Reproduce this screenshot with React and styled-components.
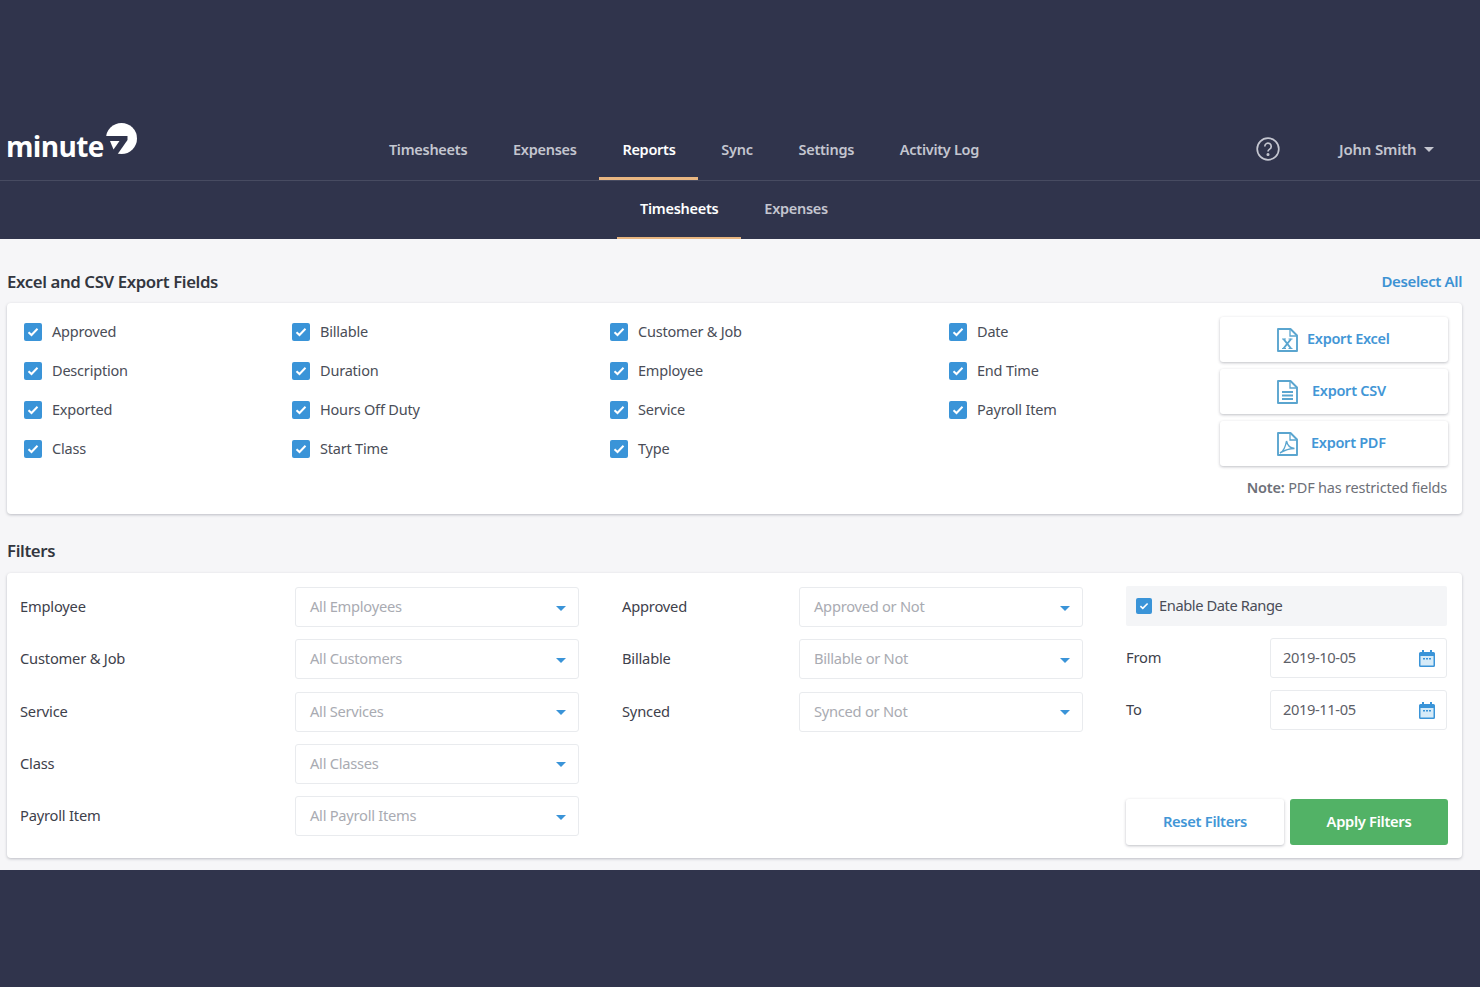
import React from "react"
import styled, { createGlobalStyle } from "styled-components"

const GlobalStyle = createGlobalStyle`
  html, body {
    margin: 0;
    padding: 0;
    background: #30344c;
  }
  * {
    box-sizing: border-box;
  }
  body {
    font-family: "Noto Sans", "Liberation Sans", sans-serif;
  }
`

const Page = styled.div`
  width: 1480px;
  height: 987px;
  background: #30344c;
  padding-top: 120px;
  overflow: hidden;
`

const MainBar = styled.header`
  display: flex;
  align-items: stretch;
  height: 61px;
  border-bottom: 1px solid #474b61;
`

const LogoWrap = styled.div`
  width: 366px;
  padding: 2px 0 0 6px;
  display: flex;
  align-items: flex-start;
`

const LogoText = styled.span`
  font-family: "Open Sans", sans-serif;
  font-weight: 700;
  font-size: 28px;
  letter-spacing: -0.65px;
  line-height: 48px;
  color: #fff;
`

const LogoMark = styled.svg`
  width: 31px;
  height: 33px;
  margin: 0 0 0 2px;
`

const Nav = styled.nav`
  display: flex;
  width: 855px;
`

const NavItem = styled.a`
  display: flex;
  align-items: center;
  padding: 0 22.9px;
  height: 60px;
  font-size: 14.5px;
  font-weight: 600;
  letter-spacing: -0.28px;
  color: ${p => (p.$active ? "#fff" : "#c4c6d0")};
  border-bottom: 3px solid ${p => (p.$active ? "#e8b681" : "transparent")};
`

const UserArea = styled.div`
  display: flex;
  align-items: center;
  height: 58px;
  color: #c4c6d0;
`

const HelpIcon = styled.svg`
  width: 24px;
  height: 24px;
  margin: 0 59px 0 35px;
`

const UserName = styled.span`
  font-size: 15px;
  font-weight: 600;
  letter-spacing: -0.2px;
`

const Caret = styled.span`
  width: 0;
  height: 0;
  margin-left: 7px;
  border-left: 5px solid transparent;
  border-right: 5px solid transparent;
  border-top: 5px solid #c4c6d0;
`

const SubBar = styled.div`
  display: flex;
  height: 58px;
  padding-left: 617px;
`

const SubItem = styled(NavItem)`
  height: 58px;
  padding: 0 23px 3px;
  border-bottom-width: 2px;
`

const Content = styled.main`
  height: 631px;
  background: #f6f6f8;
  padding: 0 18px 0 7px;
`

const SectionHead = styled.div`
  display: flex;
  align-items: center;
  justify-content: space-between;
  height: 64px;
  padding-top: 20px;
`

const FiltersHead = styled(SectionHead)`
  height: 59px;
  padding-top: 16px;
  padding-bottom: 3px;
`

const SectionTitle = styled.h2`
  margin: 0;
  font-size: 16.8px;
  font-weight: 600;
  letter-spacing: -0.38px;
  color: #33363f;
`

const TextLink = styled.a`
  font-size: 15px;
  font-weight: 600;
  letter-spacing: -0.38px;
  color: #3d92d3;
`

const Panel = styled.section`
  background: #fff;
  border-radius: 4px;
  box-shadow: 0 1px 3px rgba(40, 44, 60, 0.28);
`

const FieldsPanel = styled(Panel)`
  display: flex;
  height: 211px;
  padding: 9px 14px 0 17px;
`

const FieldGrid = styled.div`
  display: grid;
  grid-template-columns: 268px 318px 339px 1fr;
  align-items: start;
  flex: 1;
`

const FieldColumn = styled.div`
  display: flex;
  flex-direction: column;
`

const CheckRow = styled.label`
  display: flex;
  align-items: center;
  height: 39px;
  padding-bottom: 2px;
  gap: 10px;
  font-size: 14.5px;
  letter-spacing: -0.2px;
  color: #4a4d57;
`

const CheckBox = styled.span`
  width: ${p => p.$size}px;
  height: ${p => p.$size}px;
  margin-top: 2px;
  border-radius: 2px;
  background: #3a94d8;
  display: flex;
  align-items: center;
  justify-content: center;
  flex: none;
`

const ExportColumn = styled.div`
  width: 228px;
  padding-top: 5px;
  display: flex;
  flex-direction: column;
  gap: 7px;
`

const ExportButton = styled.a`
  height: 45px;
  display: flex;
  align-items: center;
  gap: ${p => p.$gap}px;
  padding: 0 0 3px 57px;
  background: #fff;
  border-radius: 3px;
  box-shadow: 0 1px 3px rgba(40, 44, 60, 0.3);
  font-size: 14.5px;
  font-weight: 600;
  letter-spacing: -0.28px;
  color: #4296d6;
`

const FileIcon = styled.svg`
  width: 21px;
  height: 24px;
  margin-top: 3px;
  flex: none;
`

const Note = styled.p`
  margin: 4px 0 0;
  padding-right: 1px;
  text-align: right;
  white-space: nowrap;
  font-size: 14.5px;
  letter-spacing: -0.2px;
  color: #6d7078;

  b {
    font-weight: 600;
  }
`

const FiltersPanel = styled(Panel)`
  display: grid;
  grid-template-columns: 559px 461px 322px;
  column-gap: 43px;
  height: 285px;
  padding: 14px 0 0 13px;
`

const FilterColumn = styled.div`
  display: flex;
  flex-direction: column;
`

const DateColumn = styled(FilterColumn)`
  margin-top: -1px;
`

const FilterRow = styled.div`
  display: flex;
  align-items: center;
  justify-content: space-between;
  height: 40px;
  margin-bottom: 12.3px;
`

const FilterLabel = styled.span`
  padding-bottom: 2px;
  font-size: 14.7px;
  letter-spacing: -0.2px;
  color: #3e414b;
`

const Select = styled.div`
  width: ${p => p.$width}px;
  height: 40px;
  display: flex;
  align-items: center;
  justify-content: space-between;
  padding: 0 12px 2px 14px;
  background: #fff;
  border: 1px solid #e9ebee;
  border-radius: 3px;
  font-size: 14.7px;
  letter-spacing: -0.27px;
  color: #a9abb2;
`

const SelectCaret = styled.span`
  width: 0;
  height: 0;
  margin-top: 4px;
  border-left: 5.5px solid transparent;
  border-right: 5.5px solid transparent;
  border-top: 5.5px solid #3a94d8;
`

const DateRangeBox = styled.label`
  display: flex;
  align-items: center;
  gap: 7px;
  width: 321px;
  height: 40px;
  padding: 0 0 2px 10px;
  margin-bottom: 12px;
  background: #f4f5f7;
  border-radius: 2px;
  font-size: 14.7px;
  letter-spacing: -0.42px;
  color: #4a4d57;
`

const DateRow = styled(FilterRow)`
  width: 321px;
  margin-bottom: 12px;
`

const DateField = styled(Select)`
  color: #5d6068;
  padding: 0 11px 2px 12px;
  letter-spacing: -0.4px;
`

const CalendarIcon = styled.svg`
  width: 16px;
  height: 17px;
  margin-top: 2px;
`

const ButtonRow = styled.div`
  display: flex;
  justify-content: space-between;
  width: 322px;
  margin-top: 57px;
`

const ResetButton = styled.a`
  width: 158px;
  height: 46px;
  padding-bottom: 2px;
  display: flex;
  align-items: center;
  justify-content: center;
  background: #fff;
  border-radius: 3px;
  box-shadow: 0 1px 3px rgba(40, 44, 60, 0.3);
  font-size: 14.7px;
  font-weight: 600;
  letter-spacing: -0.3px;
  color: #4296d6;
`

const ApplyButton = styled(ResetButton)`
  background: #52b266;
  color: #fff;
  box-shadow: none;
`

const FIELD_COLUMNS = [
  ["Approved", "Description", "Exported", "Class"],
  ["Billable", "Duration", "Hours Off Duty", "Start Time"],
  ["Customer & Job", "Employee", "Service", "Type"],
  ["Date", "End Time", "Payroll Item"],
]

const MAIN_FILTERS = [
  ["Employee", "All Employees"],
  ["Customer & Job", "All Customers"],
  ["Service", "All Services"],
  ["Class", "All Classes"],
  ["Payroll Item", "All Payroll Items"],
]

const STATUS_FILTERS = [
  ["Approved", "Approved or Not"],
  ["Billable", "Billable or Not"],
  ["Synced", "Synced or Not"],
]

const NAV_ITEMS = ["Timesheets", "Expenses", "Reports", "Sync", "Settings", "Activity Log"]

const Check = ({ size = 18 }) => (
  <CheckBox $size={size}>
    <svg width={size - 6} height={size - 8} viewBox="0 0 12 10" fill="none">
      <path d="M1.5 5.2 4.5 8l6-6.2" stroke="#fff" strokeWidth="2" />
    </svg>
  </CheckBox>
)

const ICON_BLUE = "#5aa5cf"

const FileShape = ({ children }) => (
  <FileIcon viewBox="0 0 21 24" fill="none" stroke={ICON_BLUE} strokeWidth="1.9">
    <path d="M1 1h12.500L20 7.500V23H1z" strokeLinejoin="round" />
    <path d="M13 1v7h7" strokeWidth="1.300" />
    {children}
  </FileIcon>
)

const ExcelIcon = () => (
  <FileShape>
    <path d="M6.500 11 14 20.500M14 11 6.500 20.500" strokeWidth="2" />
    <path d="M5 11h4M11.500 11h4M5 20.500h4M11.500 20.500h4" strokeWidth="1.100" />
  </FileShape>
)

const CsvIcon = () => (
  <FileShape>
    <path d="M5 12h11M5 15.500h11M5 19h11" strokeWidth="1.800" />
  </FileShape>
)

const PdfIcon = () => (
  <FileShape>
    <path d="M3 21c3-1.500 5.500-6 6.500-12 .8 4 3.500 7 8 7.500-4.500 0-9.500 1.500-14.500 4.500z" strokeWidth="1.400" />
  </FileShape>
)

const Calendar = () => (
  <CalendarIcon viewBox="0 0 16 17">
    <path
      fill="#3a94d8"
      d="M3 0h2v2h6V0h2v2h1.500A1.500 1.500 0 0 1 16 3.500v12a1.500 1.500 0 0 1-1.500 1.500h-13A1.500 1.500 0 0 1 0 15.500v-12A1.500 1.500 0 0 1 1.500 2H3z"
    />
    <rect x="1.500" y="6" width="13" height="9.500" fill="#d6ebf8" />
    <path d="M4 8h2v1.500H4zM7 8h2v1.500H7zM10 8h2v1.500h-2z" fill="#3a94d8" />
  </CalendarIcon>
)

const App = () => (
  <Page>
    <GlobalStyle />
    <MainBar>
      <LogoWrap>
        <LogoText>minute</LogoText>
        <LogoMark viewBox="0 0 31 33">
          <circle cx="15.500" cy="16.500" r="15.500" fill="#fff" />
          <path fill="#30344c" d="M-1 14h22.500v4L11 33H-1z" />
          <path fill="#fff" d="M4 19h9.500L7.500 27.500z" />
        </LogoMark>
      </LogoWrap>
      <Nav>
        {NAV_ITEMS.map(item => (
          <NavItem key={item} $active={item === "Reports"}>
            {item}
          </NavItem>
        ))}
      </Nav>
      <UserArea>
        <HelpIcon viewBox="0 0 24 24" fill="none" stroke="#c4c6d0" strokeWidth="1.700">
          <circle cx="12" cy="12" r="10.800" />
          <path d="M8.800 9.400a3.200 3.200 0 1 1 4.900 2.700c-1.100.7-1.700 1.300-1.700 2.500" />
          <circle cx="12" cy="17.500" r="0.700" fill="#c4c6d0" />
        </HelpIcon>
        <UserName>John Smith</UserName>
        <Caret />
      </UserArea>
    </MainBar>
    <SubBar>
      <SubItem $active>Timesheets</SubItem>
      <SubItem>Expenses</SubItem>
    </SubBar>
    <Content>
      <SectionHead>
        <SectionTitle>Excel and CSV Export Fields</SectionTitle>
        <TextLink>Deselect All</TextLink>
      </SectionHead>
      <FieldsPanel>
        <FieldGrid>
          {FIELD_COLUMNS.map(column => (
            <FieldColumn key={column[0]}>
              {column.map(name => (
                <CheckRow key={name}>
                  <Check />
                  {name}
                </CheckRow>
              ))}
            </FieldColumn>
          ))}
        </FieldGrid>
        <ExportColumn>
          <ExportButton $gap={9}>
            <ExcelIcon />
            Export Excel
          </ExportButton>
          <ExportButton $gap={14}>
            <CsvIcon />
            Export CSV
          </ExportButton>
          <ExportButton $gap={13}>
            <PdfIcon />
            Export PDF
          </ExportButton>
          <Note>
            <b>Note:</b> PDF has restricted fields
          </Note>
        </ExportColumn>
      </FieldsPanel>
      <FiltersHead>
        <SectionTitle>Filters</SectionTitle>
      </FiltersHead>
      <FiltersPanel>
        <FilterColumn>
          {MAIN_FILTERS.map(([label, value]) => (
            <FilterRow key={label}>
              <FilterLabel>{label}</FilterLabel>
              <Select $width={284}>
                {value}
                <SelectCaret />
              </Select>
            </FilterRow>
          ))}
        </FilterColumn>
        <FilterColumn>
          {STATUS_FILTERS.map(([label, value]) => (
            <FilterRow key={label}>
              <FilterLabel>{label}</FilterLabel>
              <Select $width={284}>
                {value}
                <SelectCaret />
              </Select>
            </FilterRow>
          ))}
        </FilterColumn>
        <DateColumn>
          <DateRangeBox>
            <Check size={16} />
            Enable Date Range
          </DateRangeBox>
          <DateRow>
            <FilterLabel>From</FilterLabel>
            <DateField $width={177}>
              2019-10-05
              <Calendar />
            </DateField>
          </DateRow>
          <DateRow>
            <FilterLabel>To</FilterLabel>
            <DateField $width={177}>
              2019-11-05
              <Calendar />
            </DateField>
          </DateRow>
          <ButtonRow>
            <ResetButton>Reset Filters</ResetButton>
            <ApplyButton>Apply Filters</ApplyButton>
          </ButtonRow>
        </DateColumn>
      </FiltersPanel>
    </Content>
  </Page>
)

export default App
